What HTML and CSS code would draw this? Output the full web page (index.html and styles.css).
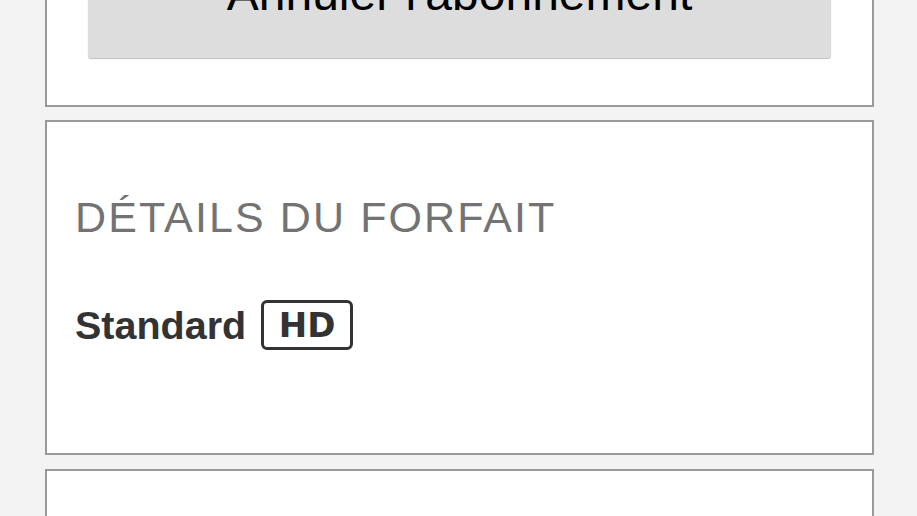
FILE: index.html
```html
<!DOCTYPE html>
<html lang="fr">
<head>
<meta charset="utf-8">
<title>Compte</title>
<link rel="stylesheet" href="styles.css">
</head>
<body>
<main class="page">
  <section class="card card-cancel">
    <button class="cancel-btn" type="button">Annuler l'abonnement</button>
  </section>
  <section class="card card-plan">
    <h2 class="section-title">DÉTAILS DU FORFAIT</h2>
    <div class="plan-row">
      <span class="plan-name">Standard</span>
      <span class="hd-badge">HD</span>
    </div>
  </section>
  <section class="card card-next"></section>
</main>
</body>
</html>
```
FILE: styles.css
```css
html, body {
  margin: 0;
  padding: 0;
  background: #f3f3f3;
  overflow: hidden;
}
body {
  font-family: "Liberation Sans", Arial, sans-serif;
}
.page {
  display: flex;
  flex-direction: column;
  padding: 0 43px 0 45px;
}
.card {
  background: #fff;
  border: 2px solid #999;
}
.card-cancel {
  margin-top: -113px;
  padding: 40px 41px 47px;
  margin-bottom: 13px;
}
.cancel-btn {
  display: block;
  width: 100%;
  height: 129px;
  border: 0;
  border-radius: 3px;
  background: #dddddd;
  box-shadow: 0 1px 1px rgba(0, 0, 0, 0.25);
  font-family: "Liberation Sans", Arial, sans-serif;
  font-size: 48px;
  line-height: 129px;
  color: #000;
  padding: 0;
}
.card-plan {
  padding: 74px 26px 103px 28px;
  margin-bottom: 14px;
}
.section-title {
  margin: 0;
  font-size: 43px;
  line-height: 43px;
  font-weight: 400;
  letter-spacing: 2.1px;
  color: #737373;
}
.plan-row {
  margin-top: 61px;
  height: 50px;
  display: flex;
  align-items: center;
  gap: 15px;
}
.plan-name {
  font-size: 39.5px;
  line-height: 40px;
  font-weight: 700;
  color: #333;
}
.hd-badge {
  box-sizing: border-box;
  height: 50px;
  width: 92px;
  display: flex;
  align-items: center;
  justify-content: center;
  border: 3px solid #333;
  border-radius: 6px;
  font-family: "DejaVu Sans", sans-serif;
  font-size: 34px;
  line-height: 34px;
  font-weight: 700;
  color: #333;
}
.card-next {
  height: 200px;
}
```
